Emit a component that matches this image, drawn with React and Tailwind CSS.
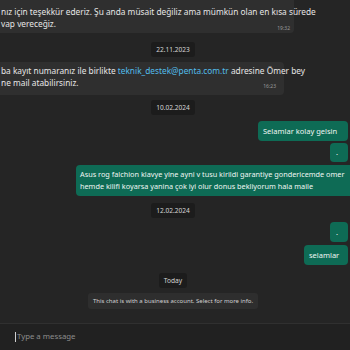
import React from "react";

function Chip({ children, className = "" }) {
  return (
    <div className={`flex justify-center pr-[4px] ${className}`}>
      <div className="bg-[#1c1c1c] text-[#d4d4d4] text-[6.6px] leading-[15px] h-[15px] px-[5px] rounded-[3px]">
        {children}
      </div>
    </div>
  );
}

function Out({ children, className = "" }) {
  return (
    <div className={`flex justify-end pr-[2px] ${className}`}>
      <div className="bg-[#0e6b55] text-[#eef6f3] text-[7.5px] rounded-[4px] whitespace-nowrap">
        {children}
      </div>
    </div>
  );
}

export default function App() {
  return (
    <div className="w-[350px] h-[350px] overflow-hidden bg-[#252525] flex flex-col font-['Noto_Sans',sans-serif]">
      {/* mesajlar */}
      <div className="h-[323px] flex flex-col overflow-hidden">
        <div className="ml-[-6px] w-[300px] h-[33px] bg-[#2f2f2f] rounded-b-[4px] pl-[7px] pt-[6px] text-[#e6e6e6] text-[8.3px] leading-[12px] whitespace-nowrap">
          <div>nız için teşekkür ederiz. Şu anda müsait değiliz ama mümkün olan en kısa sürede</div>
          <div>vap vereceğiz.</div>
          <div className="flex justify-end pr-[4px] mt-[-4px] text-[5px] leading-none text-[#9a9a9a]">19:32</div>
        </div>

        <Chip className="mt-[9px]">22.11.2023</Chip>

        <div className="mt-[5px] ml-[-6px] w-[290px] h-[33px] bg-[#2f2f2f] rounded-[4px] pl-[7px] pt-[3px] text-[#e6e6e6] text-[8.3px] leading-[12px] whitespace-nowrap">
          <div>
            ba kayıt numaranız ile birlikte <span className="text-[#53bdeb]">teknik_destek@penta.com.tr</span> adresine Ömer bey
          </div>
          <div>ne mail atabilirsiniz.</div>
          <div className="flex justify-end pr-[8px] mt-[-5px] text-[5px] leading-none text-[#9a9a9a]">16:23</div>
        </div>

        <Chip className="mt-[5px]">10.02.2024</Chip>

        <Out className="mt-[6px]">
          <div className="h-[20px] w-[90px] px-[5px] leading-[20px]">Selamlar kolay gelsin</div>
        </Out>
        <Out className="mt-[2px]">
          <div className="h-[19px] w-[18px] pl-[6px] leading-[19px]">.</div>
        </Out>
        <div className="mt-[3px] flex justify-end mr-[-6px]">
          <div className="bg-[#0e6b55] text-[#eef6f3] text-[7.3px] rounded-[4px] whitespace-nowrap h-[31px] w-[280px] pl-[4px] pt-[4px] leading-[11.5px]">
            <div>Asus rog falchion klavye yine ayni v tusu kirildi garantiye gondericemde omer</div>
            <div>hemde kilifi koyarsa yanina çok iyi olur donus bekliyorum hala maile</div>
          </div>
        </div>

        <Chip className="mt-[7px]">12.02.2024</Chip>

        <Out className="mt-[4px]">
          <div className="h-[20px] w-[18px] pl-[6px] leading-[20px]">.</div>
        </Out>
        <Out className="mt-[3px]">
          <div className="h-[20px] w-[44px] px-[5px] leading-[20px]">selamlar</div>
        </Out>

        <Chip className="mt-[8px]">Today</Chip>

        <div className="mt-[5px] flex justify-center pr-[4px]">
          <div className="bg-[#2e2e2e] text-[#d0d0d0] text-[6px] h-[16px] leading-[16px] px-[5px] rounded-[3px] whitespace-nowrap">
            This chat is with a business account. Select for more info.
          </div>
        </div>
      </div>

      {/* yazma alanı */}
      <div className="flex-1 border-t border-[#303030] bg-[#212121] flex items-center pl-[15px] pb-[1px]">
        <span className="w-[1px] h-[10px] bg-[#cfcfcf]"></span>
        <span className="text-[#8c8c8c] text-[7.8px] ml-[1px]">Type a message</span>
      </div>
    </div>
  );
}
